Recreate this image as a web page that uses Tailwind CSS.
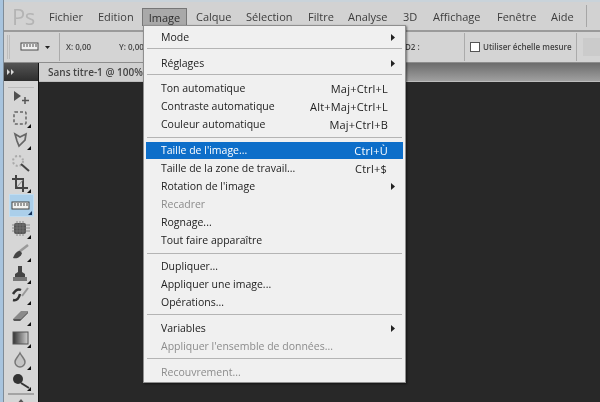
<!DOCTYPE html>
<html lang="fr">
<head>
<meta charset="utf-8">
<script src="https://cdn.jsdelivr.net/npm/@tailwindcss/browser@4"></script>
</head>
<body class="m-0">
<div class="relative w-[600px] h-[402px] overflow-hidden flex bg-[#282828] font-['Open_Sans','Noto_Sans',sans-serif] text-[#2a2a2a] blur-[0.3px]">
  <div class="w-[4px] h-full shrink-0 bg-[#a8c4de] border-r border-[#7f8c98]"></div>
  <div class="flex-1 min-w-0 flex flex-col">
    <div class="h-[2px] bg-[#c9d3da]"></div>
    <!-- menu bar -->
    <div class="h-[30px] bg-[#d2d2d2] border-b-2 border-[#9a9a9a] flex items-center text-[11px] leading-none text-[#3c3c3c]">
      <span class="ml-[8px] w-[22px] text-[22px] font-normal tracking-tight text-[#b4b4b4] leading-none">Ps</span>
      <span class="ml-[15px] w-[49px]">Fichier</span>
      <span class="w-[51px]">Edition</span>
      <span class="w-[47px]">Image</span>
      <span class="w-[50px]">Calque</span>
      <span class="w-[62px]">Sélection</span>
      <span class="w-[40px]">Filtre</span>
      <span class="w-[55px]">Analyse</span>
      <span class="w-[30px]">3D</span>
      <span class="w-[64px]">Affichage</span>
      <span class="w-[54px]">Fenêtre</span>
      <span class="w-[35px]">Aide</span>
      <span class="h-[22px] border-l border-[#a6a6a6]"></span>
    </div>
    <!-- options bar -->
    <div class="h-[31px] bg-[#d4d4d4] border-b border-[#8d8d8d] flex items-center text-[8px] font-semibold leading-none text-[#444]">
      <span class="ml-[3px] h-[24px] w-[3px] border-x border-[#bdbdbd]"></span>
      <svg class="ml-[10px]" width="30" height="10" viewBox="0 0 30 10"><rect x="1" y="1" width="17" height="7" fill="#f0f0f0" stroke="#4c4c4c"/><path d="M4 2v3M7 2v3M10 2v3M13 2v3M16 2v3" stroke="#4c4c4c"/><path d="M25 4h5l-2.500 3z" fill="#222"/></svg>
      <span class="ml-[9px] h-[28px] border-l border-[#ababab]"></span>
      <span class="ml-[6px] w-[53px]">X: 0,00</span>
      <span class="w-[286px]">Y: 0,00</span>
      <span class="w-[59px]">D2 :</span>
      <span class="h-[28px] border-l border-[#ababab]"></span>
      <span class="ml-[5px] w-[10px] h-[10px] bg-white border border-[#555]"></span>
      <span class="ml-[3px] w-[93px] whitespace-nowrap">Utiliser échelle mesure</span>
      <span class="h-[28px] border-l border-[#ababab]"></span>
      <span class="ml-[6px] h-[18px] flex-1 bg-[#cbcbcb]"></span>
    </div>
    <div class="flex-1 min-h-0 flex">
      <!-- tools column -->
      <div class="w-[35px] shrink-0 flex flex-col border-r border-[#111]">
        <div class="h-[18px] shrink-0 bg-gradient-to-b from-[#555] to-[#2e2e2e] flex items-center pl-[3px]">
          <svg width="8" height="6" viewBox="0 0 8 6"><path d="M0 0l3 3-3 3zM4 0l3 3-3 3z" fill="#d8d8d8"/></svg>
        </div>
        <div class="flex-1 bg-[#d6d6d6] flex flex-col items-center relative">
          <div class="h-[7px] w-[26px] shrink-0 border-b border-[#bcbcbc]"></div>
          <!-- move -->
          <div class="h-[20px] w-[24px] flex items-center justify-center shrink-0"><svg width="22" height="20" viewBox="0 0 22 20"><path d="M4 3l7 5-7 5z" fill="#505050"/><path d="M15 9v7M12 12.500h7" stroke="#555" stroke-width="1.500"/></svg></div>
          <!-- marquee -->
          <div class="h-[21px] w-[24px] flex items-center justify-center shrink-0"><svg width="22" height="20" viewBox="0 0 22 20"><rect x="4" y="3" width="12" height="12" rx="1" fill="none" stroke="#666" stroke-width="1.500" stroke-dasharray="3 2"/><path d="M21 15v4h-4z" fill="#111"/></svg></div>
          <!-- lasso -->
          <div class="h-[23px] w-[24px] flex items-center justify-center shrink-0"><svg width="22" height="22" viewBox="0 0 22 22"><path d="M5 4l5 3 6-3-1 6-6 6-2-5z" fill="none" stroke="#666" stroke-width="1.700"/><path d="M21 16v4h-4z" fill="#111"/></svg></div>
          <!-- wand -->
          <div class="h-[21px] w-[24px] flex items-center justify-center shrink-0"><svg width="22" height="20" viewBox="0 0 22 20"><circle cx="8" cy="8" r="5" fill="none" stroke="#aaa" stroke-width="2" stroke-dasharray="2 2"/><path d="M11 11l8 7" stroke="#444" stroke-width="2"/></svg></div>
          <!-- crop -->
          <div class="h-[21px] w-[24px] flex items-center justify-center shrink-0"><svg width="22" height="20" viewBox="0 0 22 20"><path d="M6 1v13h12M2 5h11v13" fill="none" stroke="#444" stroke-width="2"/><path d="M7 13l6-7" stroke="#888"/><path d="M21 15v4h-4z" fill="#111"/></svg></div>
          <!-- ruler selected -->
          <div class="h-[23px] w-[25px] bg-[#abcfea] flex items-center justify-center shrink-0 border border-[#c0dcf0]"><svg width="22" height="20" viewBox="0 0 22 20"><rect x="2" y="6" width="17" height="7" fill="#f2f2f2" stroke="#444"/><path d="M5 7v3M8 7v3M11 7v3M14 7v3M17 7v3" stroke="#444"/><path d="M22 15v4h-4z" fill="#13315a"/></svg></div>
          <!-- chip -->
          <div class="h-[25px] w-[24px] flex items-center justify-center shrink-0"><svg width="22" height="20" viewBox="0 0 22 20"><rect x="4" y="3" width="12" height="11" rx="2" fill="#555"/><path d="M2 5h18M2 8h18M2 11h18M7 1v15M10 1v15M13 1v15" stroke="#777" stroke-width="0.800"/><path d="M21 15v4h-4z" fill="#111"/></svg></div>
          <!-- brush -->
          <div class="h-[22px] w-[24px] flex items-center justify-center shrink-0"><svg width="22" height="20" viewBox="0 0 22 20"><path d="M18 2L9 9" stroke="#999" stroke-width="2.500"/><path d="M3 15c2-5 4-7 7-7l2 2c-1 4-5 6-9 5z" fill="#444"/><path d="M21 15v4h-4z" fill="#111"/></svg></div>
          <!-- stamp -->
          <div class="h-[21px] w-[24px] flex items-center justify-center shrink-0"><svg width="22" height="20" viewBox="0 0 22 20"><path d="M8 1h4v6l3 2v3H5V9l3-2z" fill="#444"/><rect x="3" y="12" width="14" height="4" fill="#777"/><path d="M21 15v4h-4z" fill="#111"/></svg></div>
          <!-- history brush -->
          <div class="h-[21px] w-[24px] flex items-center justify-center shrink-0"><svg width="22" height="20" viewBox="0 0 22 20"><path d="M3 8c3-5 6-5 8-4M3 14c4 1 6-2 7-6" fill="none" stroke="#333" stroke-width="2.500"/><path d="M18 2l-6 8" stroke="#999" stroke-width="2"/><path d="M21 15v4h-4z" fill="#111"/></svg></div>
          <!-- eraser -->
          <div class="h-[21px] w-[24px] flex items-center justify-center shrink-0"><svg width="22" height="20" viewBox="0 0 22 20"><path d="M3 12l8-8h7v2l-8 8H4z" fill="#8a8a8a"/><path d="M3 12h8l7-7v1l-8 8H4z" fill="#555"/><path d="M21 15v4h-4z" fill="#111"/></svg></div>
          <!-- gradient -->
          <div class="h-[23px] w-[24px] flex items-center justify-center shrink-0"><svg width="22" height="20" viewBox="0 0 22 20"><defs><linearGradient id="g"><stop offset="0" stop-color="#333"/><stop offset="1" stop-color="#d0d0d0"/></linearGradient></defs><rect x="3" y="3" width="15" height="12" fill="url(#g)" stroke="#555"/><path d="M21 15v4h-4z" fill="#111"/></svg></div>
          <!-- drop -->
          <div class="h-[21px] w-[24px] flex items-center justify-center shrink-0"><svg width="22" height="20" viewBox="0 0 22 20"><path d="M10 2c2 4 5 6 5 9a5 5 0 0 1-10 0c0-3 3-5 5-9z" fill="#c4c4c4" stroke="#777" stroke-width="1.500"/><path d="M21 15v4h-4z" fill="#111"/></svg></div>
          <!-- burn -->
          <div class="h-[21px] w-[24px] flex items-center justify-center shrink-0"><svg width="22" height="20" viewBox="0 0 22 20"><circle cx="8" cy="7" r="5" fill="#333"/><path d="M11 11l8 5" stroke="#333" stroke-width="2"/><path d="M21 15v4h-4z" fill="#111"/></svg></div>
          <div class="h-[2px] w-[26px] mt-px shrink-0 bg-[#a4a4a4]"></div>
          <svg class="mt-[4px] shrink-0" width="12" height="6" viewBox="0 0 12 6"><path d="M6 0l5 6H1z" fill="#555"/></svg>
        </div>
      </div>
      <!-- document -->
      <div class="flex-1 min-w-0 flex flex-col">
        <div class="h-[19px] shrink-0 flex bg-gradient-to-b from-[#6c6c6c] to-[#a0a0a0] border-b border-[#bdbdbd]">
          <div class="w-[106px] bg-[#d0d0d0] pl-[9px] flex items-center text-[10px] font-semibold leading-none text-[#444] whitespace-nowrap overflow-hidden">Sans titre-1 @ 100%</div>
        </div>
        <div class="flex-1 bg-[#282828]"></div>
      </div>
    </div>
  </div>

  <!-- Image button -->
  <div class="absolute left-[142px] top-[8px] w-[45px] h-[18px] bg-[#a9a9a9] border border-[#777] flex items-center justify-center text-[11px] leading-none text-[#2e2e2e]">Image</div>

  <!-- dropdown -->
  <div class="absolute left-[143px] top-[25px] w-[263px] h-[358px] bg-[#f0f0f0] border border-[#8f8f8f] pt-[2px] px-[1px] flex flex-col text-[10.5px] leading-none text-[#222] shadow-[1px_1px_2px_rgba(0,0,0,0.5)]">
    <div class="h-[18px] flex items-center pl-[16px] pr-[9px] justify-between"><span>Mode</span><svg width="4" height="7" viewBox="0 0 4 7"><path d="M0 0l4 3.500L0 7z" fill="#222"/></svg></div>
    <div class="h-px mt-[1.500px] mb-[5.500px] mx-[2px] bg-[#b4b4b4]"></div>
    <div class="h-[18px] flex items-center pl-[16px] pr-[9px] justify-between"><span>Réglages</span><svg width="4" height="7" viewBox="0 0 4 7"><path d="M0 0l4 3.500L0 7z" fill="#222"/></svg></div>
    <div class="h-px mt-[1.500px] mb-[4.500px] mx-[2px] bg-[#b4b4b4]"></div>
    <div class="h-[18px] flex items-center pl-[16px] pr-[16px] justify-between"><span>Ton automatique</span><span class="text-[11px] tracking-[0.2px]">Maj+Ctrl+L</span></div>
    <div class="h-[18px] flex items-center pl-[16px] pr-[16px] justify-between"><span>Contraste automatique</span><span class="text-[11px] tracking-[0.2px]">Alt+Maj+Ctrl+L</span></div>
    <div class="h-[18px] flex items-center pl-[16px] pr-[16px] justify-between"><span>Couleur automatique</span><span class="text-[11px] tracking-[0.2px]">Maj+Ctrl+B</span></div>
    <div class="h-px mt-[4px] mb-[4px] mx-[2px] bg-[#b4b4b4]"></div>
    <div class="h-[17px] flex items-center pl-[15px] pr-[15px] ml-px mr-px bg-[#0d6ec9] text-white justify-between"><span>Taille de l'image...</span><span class="text-[11px] tracking-[0.2px]">Ctrl+Ù</span></div>
    <div class="h-[18px] mt-[0.500px] flex items-center pl-[16px] pr-[17px] justify-between"><span>Taille de la zone de travail...</span><span class="text-[11px] tracking-[0.2px]">Ctrl+$</span></div>
    <div class="h-[18px] flex items-center pl-[16px] pr-[9px] justify-between"><span>Rotation de l'image</span><svg width="4" height="7" viewBox="0 0 4 7"><path d="M0 0l4 3.500L0 7z" fill="#222"/></svg></div>
    <div class="h-[18px] flex items-center pl-[16px] text-[#8c8c8c]">Recadrer</div>
    <div class="h-[18px] flex items-center pl-[16px]">Rognage...</div>
    <div class="h-[18px] flex items-center pl-[16px]">Tout faire apparaître</div>
    <div class="h-px mt-[3px] mb-[4px] mx-[2px] bg-[#b4b4b4]"></div>
    <div class="h-[18px] flex items-center pl-[16px]">Dupliquer...</div>
    <div class="h-[18px] flex items-center pl-[16px]">Appliquer une image...</div>
    <div class="h-[18px] flex items-center pl-[16px]">Opérations...</div>
    <div class="h-px mt-[2px] mb-[5px] mx-[2px] bg-[#b4b4b4]"></div>
    <div class="h-[18px] flex items-center pl-[16px] pr-[9px] justify-between"><span>Variables</span><svg width="4" height="7" viewBox="0 0 4 7"><path d="M0 0l4 3.500L0 7z" fill="#222"/></svg></div>
    <div class="h-[18px] flex items-center pl-[16px] text-[#8c8c8c]">Appliquer l'ensemble de données...</div>
    <div class="h-px mt-[2px] mb-[5px] mx-[2px] bg-[#b4b4b4]"></div>
    <div class="h-[18px] flex items-center pl-[16px] text-[#8c8c8c]">Recouvrement...</div>
  </div>
</div>
</body>
</html>
